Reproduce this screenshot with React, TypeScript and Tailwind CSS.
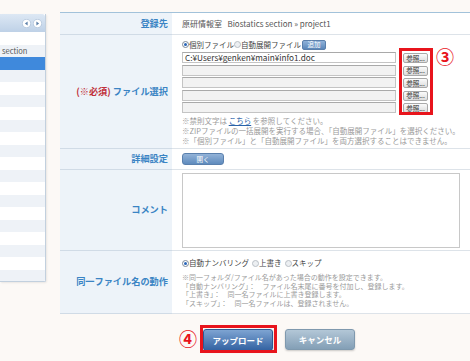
import React from "react";

function Radio({ on }: { on?: boolean }) {
  return (
    <span
      className={
        "inline-flex items-center justify-center w-[7px] h-[7px] rounded-full border shrink-0 " +
        (on ? "border-[#7d8a99] bg-white" : "border-[#b9bfc6] bg-[#eceff2]")
      }
    >
      {on ? <span className="w-[3px] h-[3px] rounded-full bg-[#2a66b8]" /> : null}
    </span>
  );
}

function Sidebar() {
  const rows = Array.from({ length: 20 }, (_, i) => i);
  return (
    <div className="mt-[14px] w-[46px] h-[268px] shrink-0 flex flex-col bg-white border-r border-b border-[#c2d0de] rounded-br-[2px] shadow-[1px_1px_2px_rgba(0,0,0,0.08)] overflow-hidden">
      <div className="h-[18px] shrink-0 bg-gradient-to-b from-[#dde8f4] to-[#bed1e7] rounded-tr-[3px] flex items-center justify-end pr-[3px] gap-[2px]">
        <svg width="9" height="9" viewBox="0 0 9 9">
          <circle cx="4.5" cy="4.5" r="4.2" fill="#ffffff" stroke="#9fb7d2" strokeWidth="0.6" />
          <path d="M5.6 2.4 L2.9 4.5 L5.6 6.6 Z" fill="#5d80aa" />
        </svg>
        <svg width="9" height="9" viewBox="0 0 9 9">
          <circle cx="4.5" cy="4.5" r="4.2" fill="#ffffff" stroke="#9fb7d2" strokeWidth="0.6" />
          <path d="M3.4 2.4 L6.1 4.5 L3.4 6.6 Z" fill="#5d80aa" />
        </svg>
      </div>
      {rows.map((i) => (
        <div
          key={i}
          className={
            "h-[12.5px] shrink-0 flex items-center pl-[2px] text-[7.5px] leading-none text-[#555] whitespace-nowrap " +
            (i === 2 ? "bg-[#3f89dc]" : i % 2 === 1 ? "bg-[#eef2f7]" : "bg-white")
          }
        >
          {i === 1 ? "section" : ""}
        </div>
      ))}
    </div>
  );
}

function Row({
  h,
  label,
  children,
  valueClass,
}: {
  h: string;
  label: React.ReactNode;
  children?: React.ReactNode;
  valueClass?: string;
}) {
  return (
    <div className={"flex " + h}>
      <div className="w-[112px] shrink-0 bg-[#edf3f9] border-b border-[#d0dbe6] flex items-center justify-end pr-[4px] text-[9.2px] leading-none font-bold text-[#3a84c4] whitespace-nowrap">
        {label}
      </div>
      <div className={"flex-1 bg-white border-b border-[#dde3e9] pl-[10px] " + (valueClass ?? "")}>{children}</div>
    </div>
  );
}

function Main() {
  const files = ["C:¥Users¥genken¥main¥info1.doc", "", "", "", ""];
  return (
    <div className="ml-[14px] mt-[12px] w-[410px] shrink-0">
      <div className="border-t border-[#a2c2da]">
        <Row h="h-[22px]" label="登録先" valueClass="flex items-center">
          <span className="text-[8px] leading-none text-[#555] whitespace-nowrap">
            原研情報室&nbsp;&nbsp;&nbsp;Biostatics section » project1
          </span>
        </Row>

        <Row
          h="h-[114px]"
          label={
            <span>
              <span className="text-[#c0303a]">(※必須)</span> ファイル選択
            </span>
          }
          valueClass="pt-[4px]"
        >
          <div className="h-[11px] flex items-center text-[7.5px] leading-none text-[#444] whitespace-nowrap">
            <Radio on />
            <span>個別ファイル</span>
            <Radio />
            <span>自動展開ファイル</span>
            <span className="ml-[1px] w-[24px] h-[10px] rounded-[2px] bg-gradient-to-b from-[#8fb2d9] to-[#5b87ba] border border-[#5a7fab] text-white text-[6.5px] flex items-center justify-center">
              追加
            </span>
          </div>
          <div className="mt-[2px] flex">
            <div className="w-[214px] flex flex-col gap-[1.5px]">
              {files.map((f, i) => (
                <div
                  key={i}
                  className={
                    "h-[11px] border border-[#c4c4c4] border-t-[#a9a9a9] flex items-center pl-[2px] text-[8.2px] leading-none text-[#333] whitespace-nowrap " +
                    (i === 0 ? "bg-white" : "bg-[#f2f2f2]")
                  }
                >
                  {f}
                </div>
              ))}
            </div>
            <div className="ml-[7px] pt-[1px] flex flex-col gap-[2.5px]">
              {files.map((_, i) => (
                <div
                  key={i}
                  className="w-[25px] h-[10px] rounded-[2px] border border-[#a9a9a9] bg-gradient-to-b from-[#fbfbfb] to-[#dcdcdc] flex items-center justify-center text-[6.5px] leading-none text-[#333]"
                >
                  参照...
                </div>
              ))}
            </div>
          </div>
          <div className="mt-[3px] text-[7.5px] leading-[10px] text-[#9a9a9a] whitespace-nowrap">
            <div>
              ※禁則文字は <span className="text-[#2a62a8] underline">こちら</span> を参照してください。
            </div>
            <div>※ZIPファイルの一括展開を実行する場合、「自動展開ファイル」を選択ください。</div>
            <div>※「個別ファイル」と「自動展開ファイル」を両方選択することはできません。</div>
          </div>
        </Row>

        <Row h="h-[21px]" label="詳細設定" valueClass="flex items-center">
          <div className="w-[42px] h-[12px] rounded-[3px] border border-[#5a80ad] bg-gradient-to-b from-[#93b3d8] to-[#5f8bbd] flex items-center justify-center text-white text-[6.5px] leading-none">
            開く
          </div>
        </Row>

        <Row h="h-[81px]" label="コメント" valueClass="pt-[3px]">
          <div className="w-[278px] h-[75px] border border-[#c8c8c8] bg-white" />
        </Row>

        <Row h="h-[63px]" label="同一ファイル名の動作" valueClass="pt-[7px]">
          <div className="h-[10px] flex items-center text-[7.5px] leading-none text-[#444] whitespace-nowrap">
            <Radio on />
            <span>自動ナンバリング</span>
            <span className="w-[3px]" />
            <Radio />
            <span>上書き</span>
            <span className="w-[3px]" />
            <Radio />
            <span>スキップ</span>
          </div>
          <div className="mt-[5px] text-[7px] leading-[8.5px] text-[#9a9a9a] whitespace-nowrap">
            <div>※同一フォルダ/ファイル名があった場合の動作を設定できます。</div>
            <div>「自動ナンバリング」：　ファイル名末尾に番号を付加し、登録します。</div>
            <div>「上書き」：　同一名ファイルに上書き登録します。</div>
            <div>「スキップ」：　同一名ファイルは、登録されません。</div>
          </div>
        </Row>
      </div>

      <div className="mt-[15px] pl-[143px] flex gap-[12px]">
        <div className="w-[70px] h-[22px] rounded-[3px] border border-[#2e5a93] bg-gradient-to-b from-[#7ea4d2] to-[#3463a2] shadow-[0_1px_2px_rgba(0,0,0,0.25)] flex items-center justify-center text-white text-[8.5px] font-bold leading-none">
          アップロード
        </div>
        <div className="w-[70px] h-[21px] rounded-[3px] border border-[#7f99ae] bg-gradient-to-b from-[#b3c7d7] to-[#839fb6] shadow-[0_1px_2px_rgba(0,0,0,0.2)] flex items-center justify-center text-white text-[8.5px] font-bold leading-none">
          キャンセル
        </div>
      </div>
    </div>
  );
}

export default function App() {
  return (
    <div className="relative w-[470px] h-[361px] overflow-hidden bg-[#fcf9f6] font-['Noto_Sans_CJK_JP',sans-serif] text-[#444]">
      <div className="flex">
        <Sidebar />
        <Main />
      </div>
      <div className="absolute left-[399px] top-[48px] w-[34px] h-[67px] border-[3px] border-[#e8141c]" />
      <div className="absolute left-[436px] top-[47px] text-[#e8141c] text-[18px] font-bold leading-none">③</div>
      <div className="absolute left-[200px] top-[325px] w-[77px] h-[28px] border-[3px] border-[#e8141c]" />
      <div className="absolute left-[179px] top-[329px] text-[#e8141c] text-[18px] font-bold leading-none">④</div>
    </div>
  );
}
